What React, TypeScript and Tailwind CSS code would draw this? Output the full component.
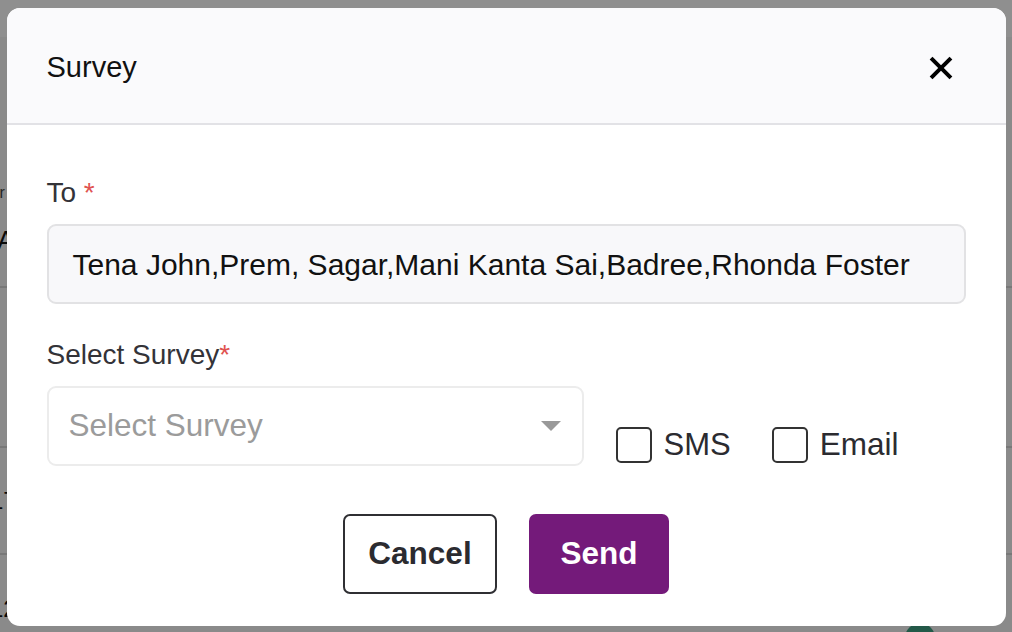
import { useState } from 'react';

export default function App() {
  const [sms, setSms] = useState(false);
  const [email, setEmail] = useState(false);

  return (
    <div className="relative h-screen w-full overflow-hidden bg-[#f6f6f6] font-['Liberation_Sans',Arial,sans-serif]">
      {/* page behind the dialog */}
      <div className="h-[37px] bg-white" />
      <div className="flex h-[251px] flex-col justify-end border-b-2 border-[#d6d6d6] pb-[26px]">
        <div className="-ml-[12px] text-[16px] text-[#444]">Dr</div>
        <div className="-ml-[20px] mt-[16px] text-[26px] text-[#111]">AAl</div>
      </div>
      <div className="h-[160px] border-b-2 border-[#d6d6d6]" />
      <div className="flex h-[107px] items-center border-b-2 border-[#d6d6d6]">
        <span className="-ml-[10px] text-[24px] text-[#111]">17</span>
      </div>
      <div className="relative flex h-[107px] items-center">
        <span className="-ml-[10px] text-[24px] text-[#111]">12</span>
        <span className="absolute left-[905px] top-[68px] h-[30px] w-[30px] rounded-full bg-[#3f9f80]" />
      </div>

      {/* backdrop + dialog */}
      <div className="absolute inset-0 flex justify-center bg-black/[0.44] pt-[8px]">
        <div className="h-[618px] w-[999px] overflow-hidden rounded-[13px] bg-white">
          <div className="flex h-[117px] items-center justify-between border-b-2 border-[#e2e2e6] bg-[#fafafc] pl-[40px] pr-[50px] pt-[4px]">
            <h2 className="text-[29px] text-[#111]">Survey</h2>
            <button type="button" className="flex h-[30px] w-[30px] items-center justify-center text-black">
              <svg width="28" height="28" viewBox="0 0 24 24" fill="none" stroke="currentColor" strokeWidth="3.4">
                <line x1="3.5" y1="3.5" x2="20.5" y2="20.5" />
                <line x1="20.5" y1="3.5" x2="3.5" y2="20.5" />
              </svg>
            </button>
          </div>

          <div className="px-[40px] pt-[47px]">
            <label className="block text-[28px] leading-[42px] text-[#333338]">
              To <span className="text-[#e0524f]">*</span>
            </label>
            <div className="mt-[10px] flex h-[80px] items-center rounded-[9px] border-2 border-[#e2e2e4] bg-[#f8f8fa] pl-[24px] text-[30px] text-[#111]">
              Tena John,Prem, Sagar,Mani Kanta Sai,Badree,Rhonda Foster
            </div>

            <label className="mt-[30px] block text-[28px] leading-[42px] text-[#333338]">
              Select Survey<span className="text-[#e0524f]">*</span>
            </label>
            <div className="mt-[10px] flex items-end gap-[32px]">
              <div className="flex h-[80px] w-[537px] items-center justify-between rounded-[9px] border-2 border-[#ececec] bg-white pl-[20px] pr-[21px]">
                <span className="text-[31.5px] text-[#9b9b9b]">Select Survey</span>
                <svg width="20" height="10" viewBox="0 0 20 10">
                  <polygon points="0,0 20,0 10,10" fill="#999" />
                </svg>
              </div>
              <div className="flex h-[42px] items-center gap-[41px]">
                <label className="flex cursor-pointer items-center gap-[12px]" onClick={() => setSms(!sms)}>
                  <span className={sms ? 'h-[36px] w-[36px] rounded-[5px] border-2 border-[#333] bg-[#741a7a]' : 'h-[36px] w-[36px] rounded-[5px] border-2 border-[#333] bg-white'} />
                  <span className="text-[31px] text-[#2b2b30]">SMS</span>
                </label>
                <label className="flex cursor-pointer items-center gap-[12px]" onClick={() => setEmail(!email)}>
                  <span className={email ? 'h-[36px] w-[36px] rounded-[5px] border-2 border-[#333] bg-[#741a7a]' : 'h-[36px] w-[36px] rounded-[5px] border-2 border-[#333] bg-white'} />
                  <span className="text-[31.5px] text-[#2b2b30]">Email</span>
                </label>
              </div>
            </div>

            <div className="mt-[48px] flex justify-center gap-[32px]">
              <button type="button" className="h-[80px] w-[154px] rounded-[7px] border-2 border-[#2f2f33] bg-white text-[31.5px] font-bold text-[#2b2b30]">
                Cancel
              </button>
              <button type="button" className="h-[80px] w-[140px] rounded-[7px] bg-[#741a7a] text-[31.5px] font-bold text-white">
                Send
              </button>
            </div>
          </div>
        </div>
      </div>
    </div>
  );
}
